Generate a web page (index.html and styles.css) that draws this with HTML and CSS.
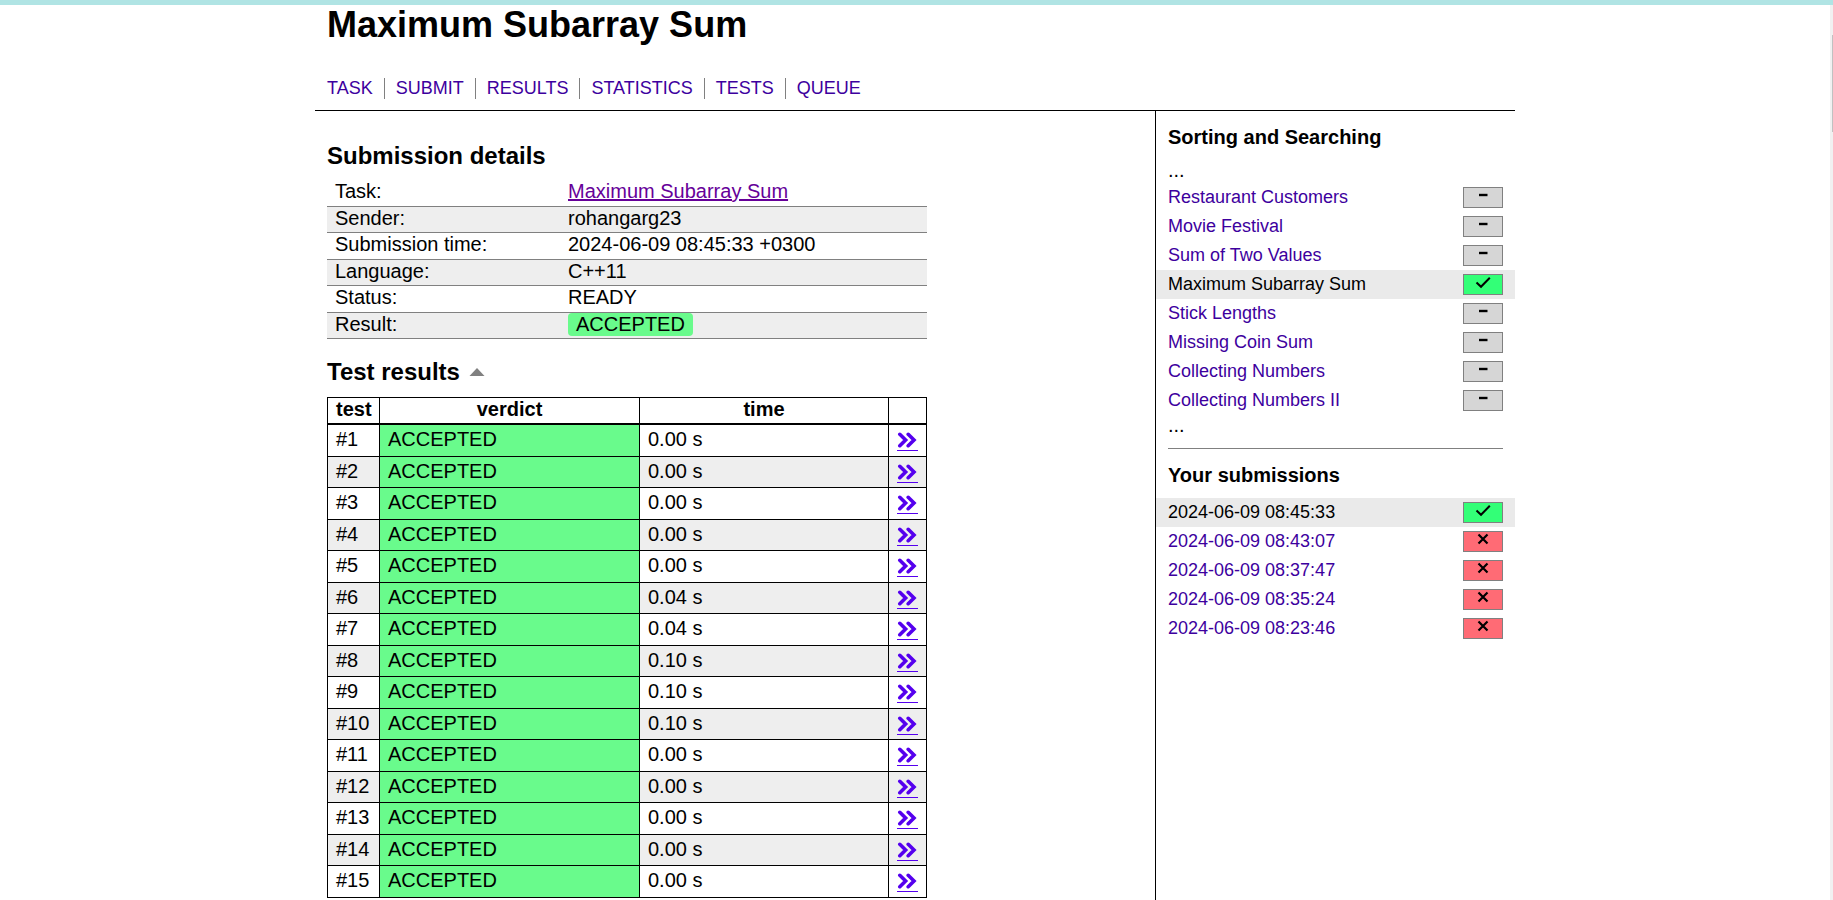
FILE: index.html
```
<!DOCTYPE html>
<html lang="en">
<head>
<meta charset="utf-8">
<title>Maximum Subarray Sum - Results</title>
<link rel="stylesheet" href="styles.css">
</head>
<body>
<svg class="defs" aria-hidden="true">
  <symbol id="minus" viewBox="0 0 20 16"><path d="M6 7h8.500" stroke-width="2.400"/></symbol>
  <symbol id="check" viewBox="0 0 20 16"><path d="M3.500 7.500l4.500 4.300L16.800 2.800" stroke-width="2"/></symbol>
  <symbol id="cross" viewBox="0 0 20 16"><path d="M5.500 2.500l9 9M14.500 2.500l-9 9" stroke-width="2.200"/></symbol>
  <symbol id="more" viewBox="0 0 20 16"><path d="M2.800 2.300l5.800 5.700l-5.800 5.700M11.200 2.300l5.800 5.700l-5.800 5.700" stroke-width="3.600" stroke-linecap="round"/></symbol>
</svg>
<div class="topbar"></div>
<div class="page">
  <div class="container">
    <header class="header">
      <h1>Maximum Subarray Sum</h1>
      <nav class="nav">
        <a href="#">TASK</a><a href="#">SUBMIT</a><a href="#">RESULTS</a><a href="#">STATISTICS</a><a href="#">TESTS</a><a href="#">QUEUE</a>
      </nav>
    </header>
    <div class="columns">
      <main class="content">
        <h2>Submission details</h2>
        <table class="details">
          <tr><th scope="row">Task:</th><td><a href="#">Maximum Subarray Sum</a></td></tr>
          <tr><th scope="row">Sender:</th><td>rohangarg23</td></tr>
          <tr><th scope="row">Submission time:</th><td>2024-06-09 08:45:33 +0300</td></tr>
          <tr><th scope="row">Language:</th><td>C++11</td></tr>
          <tr><th scope="row">Status:</th><td>READY</td></tr>
          <tr><th scope="row">Result:</th><td><span class="verdict">ACCEPTED</span></td></tr>
        </table>
        <h2 class="results-title">Test results <svg class="caret" viewBox="0 0 16 8" aria-hidden="true"><path d="M0.500 8L8 0L15.500 8z"/></svg></h2>
        <table class="results">
          <thead><tr><th class="c-test">test</th><th class="c-verdict">verdict</th><th>time</th><th class="c-more"></th></tr></thead>
          <tbody>
            <tr><td>#1</td><td class="ok">ACCEPTED</td><td>0.00 s</td><td><a href="#" aria-label="Test 1"><svg><use href="#more"/></svg></a></td></tr>
            <tr><td>#2</td><td class="ok">ACCEPTED</td><td>0.00 s</td><td><a href="#" aria-label="Test 2"><svg><use href="#more"/></svg></a></td></tr>
            <tr><td>#3</td><td class="ok">ACCEPTED</td><td>0.00 s</td><td><a href="#" aria-label="Test 3"><svg><use href="#more"/></svg></a></td></tr>
            <tr><td>#4</td><td class="ok">ACCEPTED</td><td>0.00 s</td><td><a href="#" aria-label="Test 4"><svg><use href="#more"/></svg></a></td></tr>
            <tr><td>#5</td><td class="ok">ACCEPTED</td><td>0.00 s</td><td><a href="#" aria-label="Test 5"><svg><use href="#more"/></svg></a></td></tr>
            <tr><td>#6</td><td class="ok">ACCEPTED</td><td>0.04 s</td><td><a href="#" aria-label="Test 6"><svg><use href="#more"/></svg></a></td></tr>
            <tr><td>#7</td><td class="ok">ACCEPTED</td><td>0.04 s</td><td><a href="#" aria-label="Test 7"><svg><use href="#more"/></svg></a></td></tr>
            <tr><td>#8</td><td class="ok">ACCEPTED</td><td>0.10 s</td><td><a href="#" aria-label="Test 8"><svg><use href="#more"/></svg></a></td></tr>
            <tr><td>#9</td><td class="ok">ACCEPTED</td><td>0.10 s</td><td><a href="#" aria-label="Test 9"><svg><use href="#more"/></svg></a></td></tr>
            <tr><td>#10</td><td class="ok">ACCEPTED</td><td>0.10 s</td><td><a href="#" aria-label="Test 10"><svg><use href="#more"/></svg></a></td></tr>
            <tr><td>#11</td><td class="ok">ACCEPTED</td><td>0.00 s</td><td><a href="#" aria-label="Test 11"><svg><use href="#more"/></svg></a></td></tr>
            <tr><td>#12</td><td class="ok">ACCEPTED</td><td>0.00 s</td><td><a href="#" aria-label="Test 12"><svg><use href="#more"/></svg></a></td></tr>
            <tr><td>#13</td><td class="ok">ACCEPTED</td><td>0.00 s</td><td><a href="#" aria-label="Test 13"><svg><use href="#more"/></svg></a></td></tr>
            <tr><td>#14</td><td class="ok">ACCEPTED</td><td>0.00 s</td><td><a href="#" aria-label="Test 14"><svg><use href="#more"/></svg></a></td></tr>
            <tr><td>#15</td><td class="ok">ACCEPTED</td><td>0.00 s</td><td><a href="#" aria-label="Test 15"><svg><use href="#more"/></svg></a></td></tr>
          </tbody>
        </table>
      </main>
      <aside class="sidebar">
        <h3>Sorting and Searching</h3>
        <div class="dots">...</div>
        <div class="item"><a href="#">Restaurant Customers</a><span class="score"><svg><use href="#minus"/></svg></span></div>
        <div class="item"><a href="#">Movie Festival</a><span class="score"><svg><use href="#minus"/></svg></span></div>
        <div class="item"><a href="#">Sum of Two Values</a><span class="score"><svg><use href="#minus"/></svg></span></div>
        <div class="item current"><a href="#">Maximum Subarray Sum</a><span class="score full"><svg><use href="#check"/></svg></span></div>
        <div class="item"><a href="#">Stick Lengths</a><span class="score"><svg><use href="#minus"/></svg></span></div>
        <div class="item"><a href="#">Missing Coin Sum</a><span class="score"><svg><use href="#minus"/></svg></span></div>
        <div class="item"><a href="#">Collecting Numbers</a><span class="score"><svg><use href="#minus"/></svg></span></div>
        <div class="item"><a href="#">Collecting Numbers II</a><span class="score"><svg><use href="#minus"/></svg></span></div>
        <div class="dots">...</div>
        <hr>
        <h3>Your submissions</h3>
        <div class="item current"><a href="#">2024-06-09 08:45:33</a><span class="score full"><svg><use href="#check"/></svg></span></div>
        <div class="item"><a href="#">2024-06-09 08:43:07</a><span class="score zero"><svg><use href="#cross"/></svg></span></div>
        <div class="item"><a href="#">2024-06-09 08:37:47</a><span class="score zero"><svg><use href="#cross"/></svg></span></div>
        <div class="item"><a href="#">2024-06-09 08:35:24</a><span class="score zero"><svg><use href="#cross"/></svg></span></div>
        <div class="item"><a href="#">2024-06-09 08:23:46</a><span class="score zero"><svg><use href="#cross"/></svg></span></div>
      </aside>
    </div>
  </div>
  <div class="track"><div class="thumb"></div></div>
</div>
</body>
</html>
```
FILE: styles.css
```
* { box-sizing: border-box; }
body {
  margin: 0;
  height: 100vh;
  display: flex;
  flex-direction: column;
  overflow: hidden;
  background: #fff;
  color: #000;
  font: 20px/23px "Liberation Sans", Arial, sans-serif;
}
h1, h2, h3 { margin: 0; }
a { color: #3d009e; text-decoration: none; }
.defs { display: none; }
svg { fill: none; stroke: currentColor; }

.topbar { flex: none; height: 5px; background: #b0e4e4; }
.page { flex: 1; min-height: 0; display: flex; }
.track { width: 3px; padding: 30px 0 0 2px; background: #f1f1f1; }
.thumb { height: 97px; background: #c1c1c1; }

.container {
  flex: 1;
  max-width: 1200px;
  margin: 0 auto;
  display: flex;
  flex-direction: column;
}
.header { padding: 2px 12px 11px; border-bottom: 1px solid #000; }
h1 { font-size: 36px; line-height: 36px; }
.nav { display: flex; margin-top: 35px; font-size: 18px; line-height: 21px; }
.nav a { padding: 0 11px; border-left: 1px solid #808080; }
.nav a:first-child { padding-left: 0; border-left: 0; }

.columns { flex: 1; display: flex; }
.content { flex: 1; padding: 31px 12px 0; }
h2 { font-size: 24px; line-height: 28px; }

table { width: 600px; max-width: 100%; border-collapse: collapse; }
.details { margin-top: 9px; }
.details tr { height: 26px; border-bottom: 1px solid #808080; }
.details tr:nth-child(odd) { height: 27px; }
.details tr:nth-child(even), .results tbody tr:nth-child(even) { background: #eee; }
.details th, .details td { padding: 0 8px 2px; text-align: left; font-weight: normal; }
.details th { width: 233px; }
.details a { color: #660099; text-decoration: underline; }
.verdict { display: inline-block; padding: 0 8px; border-radius: 4px; background: #69fb8c; }

.results-title { margin-top: 19px; }
.caret { width: 16px; height: 8px; margin-left: 2px; vertical-align: 4px; fill: #808080; stroke: none; }
.results { margin-top: 11px; table-layout: fixed; }
.results th, .results td { border: 1px solid #000; padding: 0 8px; }
.results thead tr { height: 27px; border-bottom: 2px solid #000; }
.results thead th { padding-bottom: 2px; }
.results tbody tr { height: 32px; }
.results tbody tr:nth-child(even) { height: 31px; }
.results tbody tr:nth-child(odd) td { padding-bottom: 1px; }
.c-test { width: 52px; }
.c-verdict { width: 260px; }
.c-more { width: 38px; }
.results .ok { background: #69fb8c; }
.results a { display: block; width: 21px; padding-top: 3px; border-bottom: 1px solid #5500ee; color: #5500ee; }
.results a svg { display: block; width: 20px; height: 16px; margin-bottom: 2px; }

.sidebar { width: 360px; padding: 15px 12px 0; border-left: 1px solid #000; }
.sidebar h3 { font-size: 20px; line-height: 23px; margin-bottom: 11px; }
.dots { padding-bottom: 2px; line-height: 21px; }
.item {
  display: flex;
  align-items: center;
  justify-content: space-between;
  height: 29px;
  margin: 0 -12px;
  padding: 0 12px;
  font-size: 18px;
}
.item.current { background: #eaeaea; }
.item.current a { color: #000; }
.score { width: 40px; height: 21px; border: 1px solid #808080; background: #d6d6d6; text-align: center; }
.score svg { display: block; width: 20px; height: 16px; margin: 0 auto; }
.score.full { background: #33ff77; }
.score.zero { background: #ff6b75; }
hr { margin: 10px 0 15px; border: 0; border-top: 1px solid #808080; }
```
